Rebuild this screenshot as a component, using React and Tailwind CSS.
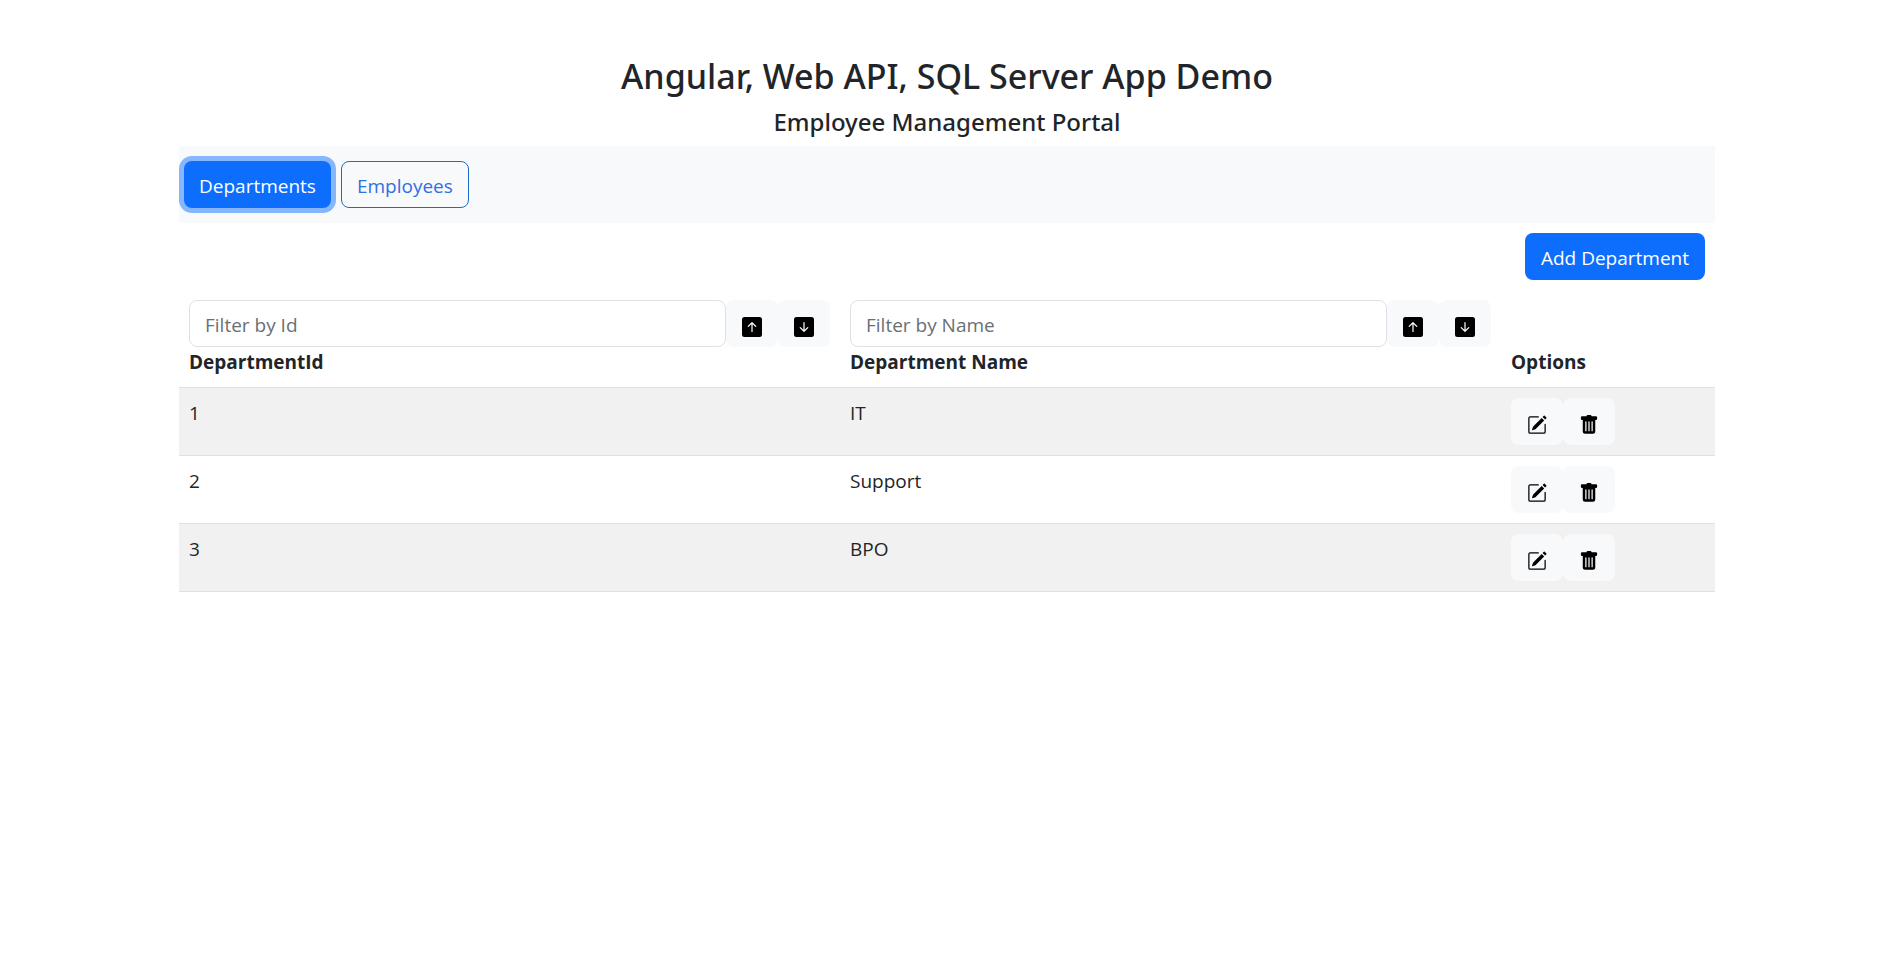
import {
  BsArrowDownSquareFill,
  BsArrowUpSquareFill,
  BsPencilSquare,
  BsTrashFill,
} from "react-icons/bs";

const departments = [
  { id: 1, name: "IT" },
  { id: 2, name: "Support" },
  { id: 3, name: "BPO" },
];

function IconButton({ label, children }) {
  return (
    <button
      type="button"
      aria-label={label}
      className="flex h-[47px] w-[52px] shrink-0 items-center justify-center rounded-lg bg-[#f8f9fa] pt-1.5 text-black"
    >
      {children}
    </button>
  );
}

function FilterHeader({ title, placeholder }) {
  return (
    <th scope="col" className="border-b border-[#dee2e6] p-2.5 text-left align-bottom font-bold">
      <div className="flex">
        <input
          type="text"
          aria-label={placeholder}
          placeholder={placeholder}
          className="h-[47px] min-w-0 flex-1 rounded-lg border border-[#dee2e6] bg-white px-[15px] pt-0.5 font-normal placeholder:text-[#6a6f75]"
        />
        <IconButton label={`${title} ascending`}>
          <BsArrowUpSquareFill className="size-5" />
        </IconButton>
        <IconButton label={`${title} descending`}>
          <BsArrowDownSquareFill className="size-5" />
        </IconButton>
      </div>
      {title}
    </th>
  );
}

export default function App() {
  return (
    <div className="pr-[3px] font-['Open_Sans','Noto_Sans',sans-serif] text-[19px] leading-[30px] text-[#212529]">
      <main className="mx-auto w-full max-w-[1536px] pt-[55px]">
        <h3 className="mb-2.5 text-center font-['Noto_Sans',sans-serif] text-[34px] leading-[42px] font-medium">
          Angular, Web API, SQL Server App Demo
        </h3>
        <h5 className="mb-[9px] text-center font-['Noto_Sans',sans-serif] text-[24px] leading-[30px] font-medium">
          Employee Management Portal
        </h5>

        <nav className="flex gap-2.5 bg-[#f8f9fa] px-[5px] pt-[15px] pb-[15px]">
          <button
            type="button"
            className="h-[47px] rounded-lg bg-[#0d6efd] px-[15px] pt-0.5 text-white ring-[5px] ring-[#86b6fe]"
          >
            Departments
          </button>
          <button
            type="button"
            className="h-[47px] rounded-lg border border-[#1f6ac6] px-[15px] pt-0.5 text-[#2f6fe4]"
          >
            Employees
          </button>
        </nav>

        <div className="flex justify-end p-2.5">
          <button type="button" className="h-[47px] rounded-lg bg-[#0d6efd] px-4 pt-0.5 text-white">
            Add Department
          </button>
        </div>

        <table className="w-full table-fixed border-separate border-spacing-0">
          <colgroup>
            <col />
            <col />
            <col className="w-[214px]" />
          </colgroup>
          <thead>
            <tr>
              <FilterHeader title="DepartmentId" placeholder="Filter by Id" />
              <FilterHeader title="Department Name" placeholder="Filter by Name" />
              <th scope="col" className="border-b border-[#dee2e6] p-2.5 text-left align-bottom font-bold">
                Options
              </th>
            </tr>
          </thead>
          <tbody>
            {departments.map((d) => (
              <tr key={d.id} className="odd:bg-[#f1f1f1]">
                <td className="border-b border-[#dee2e6] p-2.5 align-top">{d.id}</td>
                <td className="border-b border-[#dee2e6] p-2.5 align-top">{d.name}</td>
                <td className="border-b border-[#dee2e6] p-2.5 align-top">
                  <div className="flex">
                    <IconButton label={`Edit ${d.name}`}>
                      <BsPencilSquare className="size-5" />
                    </IconButton>
                    <IconButton label={`Delete ${d.name}`}>
                      <BsTrashFill className="size-5" />
                    </IconButton>
                  </div>
                </td>
              </tr>
            ))}
          </tbody>
        </table>
      </main>
    </div>
  );
}
